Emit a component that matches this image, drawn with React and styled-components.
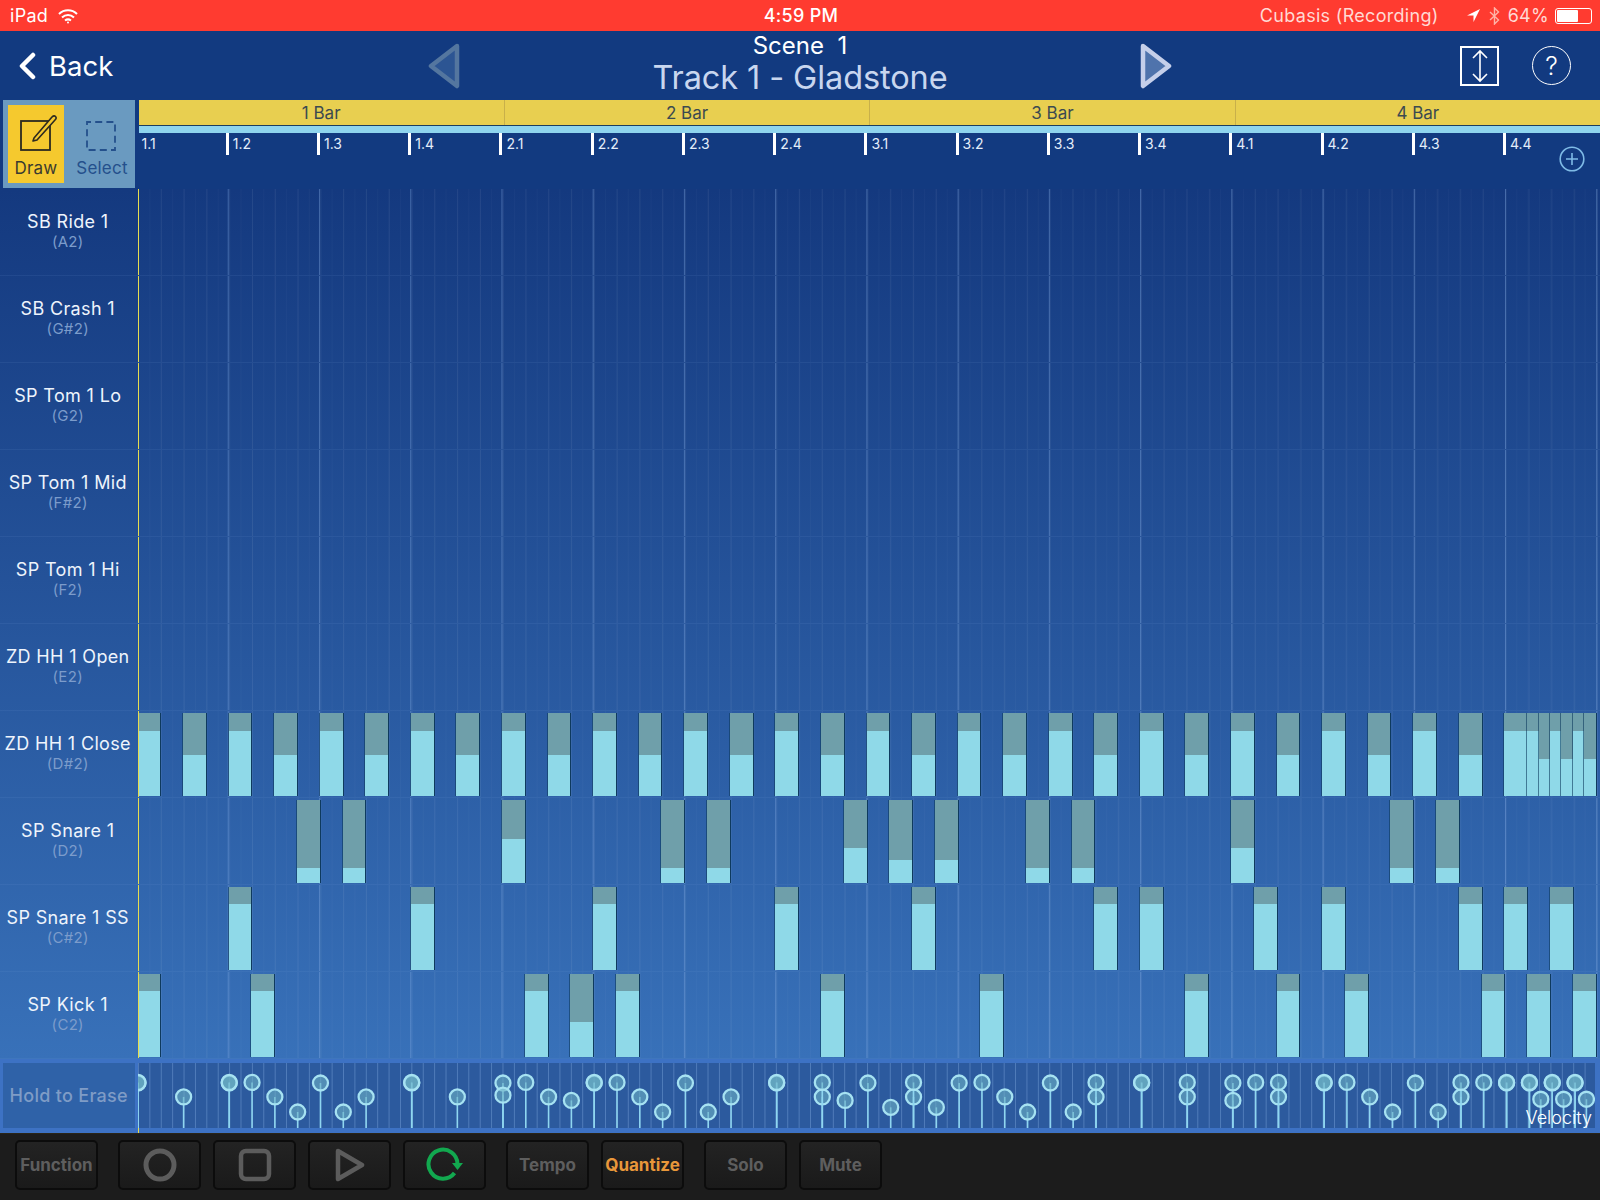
import React from 'react';
import styled, { createGlobalStyle } from 'styled-components';

const STEP = 11.405; // one 32nd note, 128 of them across the four bars
const UI_FONT = '"Inter", "Liberation Sans", sans-serif';

const hiHat = [];
for (let k = 0; k < 30; k++) {
  hiHat.push({ step: k * 4, span: 2, cap: k % 2 === 0 ? 18 : 42 });
}
hiHat.push(
  { step: 120, span: 2, cap: 18 },
  { step: 122, span: 1, cap: 18 },
  { step: 123, span: 1, cap: 46 },
  { step: 124, span: 1, cap: 18 },
  { step: 125, span: 1, cap: 46 },
  { step: 126, span: 1, cap: 18 },
  { step: 127, span: 1, cap: 46 },
);

const sixteenths = (list) => list.map(([k, cap]) => ({ step: k * 2, span: 2, cap }));

const rows = [
  { name: 'SB Ride 1', pitch: 'A2', notes: [] },
  { name: 'SB Crash 1', pitch: 'G#2', notes: [] },
  { name: 'SP Tom 1 Lo', pitch: 'G2', notes: [] },
  { name: 'SP Tom 1 Mid', pitch: 'F#2', notes: [] },
  { name: 'SP Tom 1 Hi', pitch: 'F2', notes: [] },
  { name: 'ZD HH 1 Open', pitch: 'E2', notes: [] },
  { name: 'ZD HH 1 Close', pitch: 'D#2', notes: hiHat },
  {
    name: 'SP Snare 1',
    pitch: 'D2',
    notes: sixteenths([
      [7, 68], [9, 68], [16, 39], [23, 68], [25, 68], [31, 48], [33, 60],
      [35, 60], [39, 68], [41, 68], [48, 48], [55, 68], [57, 68],
    ]),
  },
  {
    name: 'SP Snare 1 SS',
    pitch: 'C#2',
    notes: sixteenths([
      [4, 17], [12, 17], [20, 17], [28, 17], [34, 17], [42, 17],
      [44, 17], [49, 17], [52, 17], [58, 17], [60, 17], [62, 17],
    ]),
  },
  {
    name: 'SP Kick 1',
    pitch: 'C2',
    notes: sixteenths([
      [0, 17], [5, 17], [17, 17], [19, 48], [21, 17], [30, 17], [37, 17],
      [46, 17], [50, 17], [53, 17], [59, 17], [61, 17], [63, 17],
    ]),
  },
];

const velocities = rows.flatMap((r) => r.notes);
const bars = ['1 Bar', '2 Bar', '3 Bar', '4 Bar'];
const beats = [1, 2, 3, 4].flatMap((b) => [1, 2, 3, 4].map((n) => `${b}.${n}`));

const DrawIcon = () => (
  <svg width="44" height="38" viewBox="0 0 44 38" fill="none">
    <rect x="7" y="7" width="29" height="29" stroke="#2c2a20" strokeWidth="1.8" />
    <path d="M20 24 L38 3 Q40 1 41.5 2.5 Q43 4 41 6 L23 26 L19 27 Z" fill="#f5c92e" stroke="#2c2a20" strokeWidth="1.6" strokeLinejoin="round" />
  </svg>
);

const SelectIcon = () => (
  <SelectSvg width="32" height="32" viewBox="0 0 32 32" fill="none">
    <rect x="2" y="2" width="28" height="28" stroke="#24508c" strokeWidth="1.8" strokeDasharray="7 4.2" strokeDashoffset="3" />
  </SelectSvg>
);

const NavTriangle = ({ flip, stroke, fill }) => (
  <svg width="34" height="46" viewBox="0 0 34 46" style={flip ? { transform: 'scaleX(-1)' } : undefined}>
    <path d="M30 3 L4 23 L30 43 Z" fill={fill} stroke={stroke} strokeWidth="4.5" strokeLinejoin="round" />
  </svg>
);

const App = () => (
  <Screen>
    <GlobalStyle />
    <StatusBar>
      <StatusSide>
        <span>iPad</span>
        <svg width="20" height="16" viewBox="0 0 20 16" fill="none" stroke="#fff" strokeWidth="2">
          <path d="M1 6 C6 1 14 1 19 6" />
          <path d="M4 9.5 C7.5 6 12.5 6 16 9.5" />
          <path d="M7 12.5 C9 11 11 11 13 12.5" />
          <circle cx="10" cy="14.5" r="1" fill="#fff" stroke="none" />
        </svg>
      </StatusSide>
      <Clock>4:59 PM</Clock>
      <StatusSide $right>
        <span>Cubasis (Recording)</span>
        <StatusGlyphs>
          <svg width="15" height="15" viewBox="0 0 15 15">
            <path d="M14 1 L1 7.5 L7.5 7.5 L7.5 14 Z" fill="#fff" />
          </svg>
          <svg width="11" height="18" viewBox="0 0 11 18" fill="none" stroke="#ffb3a8" strokeWidth="1.4">
            <path d="M1 5 L9.5 13 L5.5 17 V1 L9.5 5 L1 13" />
          </svg>
          <span>64%</span>
          <Battery><BatteryFill /></Battery>
        </StatusGlyphs>
      </StatusSide>
    </StatusBar>

    <Header>
      <BackLink>
        <svg width="20" height="28" viewBox="0 0 20 28" fill="none" stroke="#fff" strokeWidth="4.5" strokeLinecap="round" strokeLinejoin="round">
          <path d="M16 3 L5 14 L16 25" />
        </svg>
        Back
      </BackLink>
      <TitleNav>
        <NavTriangle stroke="#54769f" fill="#2c5593" />
        <TitleBlock>
          <Scene>Scene&nbsp; 1</Scene>
          <TrackName>Track 1 - Gladstone</TrackName>
        </TitleBlock>
        <NavTriangle flip stroke="#c5cfea" fill="#4f73ac" />
      </TitleNav>
      <HeaderActions>
        <ResizeButton>
          <svg width="18" height="34" viewBox="0 0 18 34" fill="none" stroke="#fff" strokeWidth="1.6">
            <path d="M2 9 L9 2 L16 9 M9 2 V32 M2 25 L9 32 L16 25" />
          </svg>
        </ResizeButton>
        <HelpButton>?</HelpButton>
      </HeaderActions>
    </Header>

    <TopArea>
      <ToolBox>
        <ToolButton $active>
          <DrawIcon />
          Draw
        </ToolButton>
        <ToolButton>
          <SelectIcon />
          Select
        </ToolButton>
      </ToolBox>
      <Timeline>
        <BarStrip>
          {bars.map((b) => <BarCell key={b}>{b}</BarCell>)}
        </BarStrip>
        <Ruler>
          {beats.map((b) => (
            <Beat key={b} $first={b === '1.1'}>{b}</Beat>
          ))}
          <AddButton>
            <svg width="26" height="26" viewBox="0 0 26 26" fill="none" stroke="#7fbbe6" strokeWidth="1.6">
              <circle cx="13" cy="13" r="11.8" />
              <path d="M13 7 V19 M7 13 H19" />
            </svg>
          </AddButton>
        </Ruler>
      </Timeline>
    </TopArea>

    <Lanes>
      {rows.map((row) => (
        <LaneRow key={row.name}>
          <PadLabel>
            <PadName>{row.name}</PadName>
            <PadPitch>({row.pitch})</PadPitch>
          </PadLabel>
          <NoteLane>
            {row.notes.map((n) => (
              <Note key={n.step} $step={n.step} $span={n.span} $cap={n.cap} />
            ))}
          </NoteLane>
        </LaneRow>
      ))}
    </Lanes>

    <VelocityRow>
      <EraseCell><EraseLabel>Hold to Erase</EraseLabel></EraseCell>
      <VelocityLane>
        <svg width="1460" height="65" viewBox="0 0 1460 65">
          {velocities.map((n, i) => {
            const x = n.step * STEP;
            const y = 20 + (n.cap - 18) * 0.58;
            return (
              <g key={i}>
                <line x1={x} x2={x} y1={y} y2={65} stroke="#8fd6f0" strokeWidth="1.6" />
                <circle cx={x} cy={y} r="7.5" fill="#6cb0c4" fillOpacity="0.6" stroke="#a6e2f2" strokeWidth="2.3" />
              </g>
            );
          })}
        </svg>
        <VelocityTag>Velocity</VelocityTag>
      </VelocityLane>
    </VelocityRow>

    <Transport>
      <TransportGroup><TransportButton>Function</TransportButton></TransportGroup>
      <TransportGroup>
        <TransportButton>
          <svg width="34" height="34" viewBox="0 0 34 34" fill="none" stroke="#5c5c5c" strokeWidth="5">
            <circle cx="17" cy="17" r="14" />
          </svg>
        </TransportButton>
        <TransportButton>
          <svg width="34" height="34" viewBox="0 0 34 34" fill="none" stroke="#5c5c5c" strokeWidth="4.5">
            <rect x="3" y="3" width="28" height="28" rx="5" />
          </svg>
        </TransportButton>
        <TransportButton>
          <svg width="34" height="34" viewBox="0 0 34 34" fill="none" stroke="#5c5c5c" strokeWidth="4.5">
            <path d="M5 3 L29 17 L5 31 Z" strokeLinejoin="round" />
          </svg>
        </TransportButton>
        <TransportButton>
          <svg width="40" height="36" viewBox="0 0 40 36" fill="none" stroke="#12a84f" strokeWidth="4">
            <path d="M29.5 26 A14.5 14.5 0 1 1 32.5 17" />
            <path d="M27 16 L38 16 L32.5 23 Z" fill="#12a84f" stroke="none" />
          </svg>
        </TransportButton>
      </TransportGroup>
      <TransportGroup>
        <TransportButton>Tempo</TransportButton>
        <TransportButton $on>Quantize</TransportButton>
      </TransportGroup>
      <TransportGroup>
        <TransportButton>Solo</TransportButton>
        <TransportButton>Mute</TransportButton>
      </TransportGroup>
    </Transport>
  </Screen>
);

export default App;

const GlobalStyle = createGlobalStyle`
  * {
    box-sizing: border-box;
  }
  body {
    margin: 0;
    background: #1c1c1c;
    font-family: ${UI_FONT};
  }
`;

const Screen = styled.div`
  width: 1600px;
  height: 1200px;
  display: flex;
  flex-direction: column;
  overflow: hidden;
`;

const StatusBar = styled.div`
  height: 31px;
  flex: none;
  background: #ff3b30;
  color: #fff;
  display: grid;
  grid-template-columns: 1fr auto 1fr;
  align-items: center;
  padding: 0 8px 0 10px;
  font-size: 18px;
  letter-spacing: 0.3px;
`;

const StatusSide = styled.div`
  display: flex;
  align-items: center;
  gap: 10px;
  justify-content: ${(p) => (p.$right ? 'flex-end' : 'flex-start')};
  color: ${(p) => (p.$right ? '#ffd9d4' : '#fff')};
`;

const StatusGlyphs = styled.div`
  display: flex;
  align-items: center;
  gap: 8px;
  margin-left: 17px;
`;

const Clock = styled.div`
  font-weight: 500;
`;

const Battery = styled.div`
  width: 37px;
  height: 16px;
  margin-left: -2px;
  border: 1px solid #fff;
  border-radius: 3px;
  padding: 1px;
`;

const BatteryFill = styled.div`
  width: 64%;
  height: 100%;
  background: #fff;
  border-radius: 1px;
`;

const Header = styled.div`
  height: 69px;
  flex: none;
  background: #123a80;
  color: #fff;
  display: grid;
  grid-template-columns: 1fr auto 1fr;
  align-items: center;
`;

const BackLink = styled.div`
  display: flex;
  align-items: center;
  gap: 12px;
  padding-left: 17px;
  font-size: 27.5px;
`;

const TitleNav = styled.div`
  display: flex;
  align-items: center;
  gap: 191px;
`;

const TitleBlock = styled.div`
  width: 296px;
  margin-top: -4px;
  display: flex;
  flex-direction: column;
  align-items: center;
  white-space: nowrap;
`;

const Scene = styled.div`
  font-size: 24px;
  line-height: 28px;
`;

const TrackName = styled.div`
  font-size: 32.5px;
  line-height: 36px;
  letter-spacing: -0.1px;
  color: #c8d6ef;
`;

const HeaderActions = styled.div`
  display: flex;
  align-items: center;
  justify-content: flex-end;
  gap: 33px;
  padding-right: 29px;
`;

const ResizeButton = styled.div`
  width: 39px;
  height: 40px;
  border: 2px solid #fff;
  display: flex;
  align-items: center;
  justify-content: center;
`;

const HelpButton = styled.div`
  width: 39px;
  height: 39px;
  border: 1.5px solid #fff;
  border-radius: 50%;
  font-size: 25px;
  font-weight: 300;
  display: flex;
  align-items: center;
  justify-content: center;
`;

const TopArea = styled.div`
  height: 89px;
  flex: none;
  display: flex;
  background: #123a80;
`;

const ToolBox = styled.div`
  width: 138.5px;
  flex: none;
  position: relative;
  z-index: 1;
  background: #123a80;
  padding: 0 3.5px 1px 3px;
  display: flex;
`;

const ToolButton = styled.div`
  flex: ${(p) => (p.$active ? '0 0 66px' : '1')};
  display: flex;
  flex-direction: column;
  align-items: center;
  justify-content: flex-end;
  gap: 6px;
  padding-bottom: 5px;
  font-size: 17px;
  letter-spacing: 0.2px;
  color: ${(p) => (p.$active ? '#3a3a30' : '#24508c')};
  background: ${(p) => (p.$active ? '#f5c92e' : '#6a9ac0')};
  border: 5px solid #6a9ac0;
`;

const SelectSvg = styled.svg`
  margin-right: 3px;
`;

const Timeline = styled.div`
  flex: 1;
  min-width: 0;
  display: flex;
  flex-direction: column;
`;

const BarStrip = styled.div`
  height: 26px;
  flex: none;
  display: grid;
  grid-template-columns: repeat(4, 1fr);
  background: #e8cf50;
  border-bottom: 1px solid #1c3e5e;
`;

const BarCell = styled.div`
  display: flex;
  align-items: center;
  justify-content: center;
  font-size: 17px;
  color: #3b4a50;
  & + & {
    border-left: 1px solid #c8b04a;
  }
`;

const Ruler = styled.div`
  flex: 1;
  position: relative;
  margin-left: -4px;
  display: grid;
  grid-template-columns: repeat(16, ${STEP * 8}px);
  border-top: 7px solid #8fd5ee;
  color: #e4eefa;
  font-size: 14px;
`;

const Beat = styled.div`
  height: 22px;
  padding: 1px 0 0 4px;
  border-left: 3px solid ${(p) => (p.$first ? 'transparent' : '#fff')};
  line-height: 20px;
`;

const AddButton = styled.div`
  position: absolute;
  right: 15px;
  top: 13px;
  width: 26px;
  height: 26px;
`;

const Lanes = styled.div`
  height: 870px;
  flex: none;
  display: grid;
  grid-template-rows: repeat(10, 1fr);
  background: linear-gradient(#14397f, #3871b9);
`;

const LaneRow = styled.div`
  display: flex;
  min-height: 0;
  border-bottom: 1px solid rgba(130, 170, 225, 0.1);
`;

const PadLabel = styled.div`
  width: 138.5px;
  flex: none;
  position: relative;
  z-index: 1;
  border-right: 1.5px solid #e6dc50;
  padding: 0 2px 2px 0;
  display: flex;
  flex-direction: column;
  align-items: center;
  justify-content: center;
  color: #eef4fc;
`;

const PadName = styled.div`
  font-size: 18px;
  line-height: 22px;
  letter-spacing: 0.35px;
  white-space: nowrap;
`;

const PadPitch = styled.div`
  font-size: 15px;
  line-height: 18px;
  letter-spacing: 0.3px;
  color: #7c9ccb;
`;

const NoteLane = styled.div`
  flex: 1;
  min-width: 0;
  margin-left: -1px;
  overflow: hidden;
  display: grid;
  grid-template-columns: repeat(128, ${STEP}px);
  padding: 2px 0 1px;
  background:
    linear-gradient(90deg, rgba(130, 170, 225, 0.42) 0 1px, transparent 1px) ${STEP * 8 - 1.5}px 0 / ${STEP * 8}px 100% repeat-x,
    linear-gradient(90deg, rgba(255, 255, 255, 0.05) 0 1px, transparent 1px) 0 0 / ${STEP * 2}px 100% repeat-x,
    linear-gradient(90deg, rgba(255, 255, 255, 0.025) 0 1px, transparent 1px) 0 0 / ${STEP}px 100% repeat-x;
`;

const Note = styled.div`
  grid-column: ${(p) => p.$step + 1} / span ${(p) => p.$span};
  grid-row: 1;
  background: linear-gradient(#6f9faa ${(p) => p.$cap}px, #8fd9e8 ${(p) => p.$cap}px);
  box-shadow: 1px 0 0 #0e3a5e, -1px 0 0 rgba(14, 58, 94, 0.6);
`;

const VelocityRow = styled.div`
  height: 74px;
  flex: none;
  display: flex;
  background: #3d72c4;
  padding: 4px 5px 5px 3px;
`;

const EraseCell = styled.div`
  width: 135.5px;
  flex: none;
  padding-right: 3px;
  border-right: 1.5px solid #e6dc50;
  margin-bottom: -5px;
`;

const EraseLabel = styled.div`
  height: 65px;
  background: #2f62a8;
  color: #7f9cc6;
  font-size: 18px;
  font-weight: 500;
  letter-spacing: 0.3px;
  display: flex;
  align-items: center;
  justify-content: center;
  white-space: nowrap;
`;

const VelocityLane = styled.div`
  flex: 1;
  min-width: 0;
  position: relative;
  margin-left: -1px;
  overflow: hidden;
  background:
    linear-gradient(90deg, rgba(150, 190, 240, 0.35) 0 1px, transparent 1px) 0 0 / ${STEP}px 100% repeat-x,
    #2c5a9e;
  svg {
    display: block;
  }
`;

const VelocityTag = styled.div`
  position: absolute;
  right: 3px;
  bottom: 0;
  color: #fff;
  font-size: 18px;
  font-weight: 300;
`;

const Transport = styled.div`
  flex: 1;
  background: #1c1c1c;
  border-top: 1px solid #2a2518;
  padding: 6px 0 0 15px;
  display: flex;
  align-items: flex-start;
  gap: 20px;
`;

const TransportGroup = styled.div`
  display: flex;
  gap: 12px;
`;

const TransportButton = styled.div`
  width: 83px;
  height: 50px;
  background: linear-gradient(#232323, #1a1a1a);
  border: 2px solid #0c0c0c;
  border-radius: 5px;
  display: flex;
  align-items: center;
  justify-content: center;
  font-size: 17px;
  font-weight: 700;
  color: ${(p) => (p.$on ? '#e8973a' : '#5e5e5e')};
`;
